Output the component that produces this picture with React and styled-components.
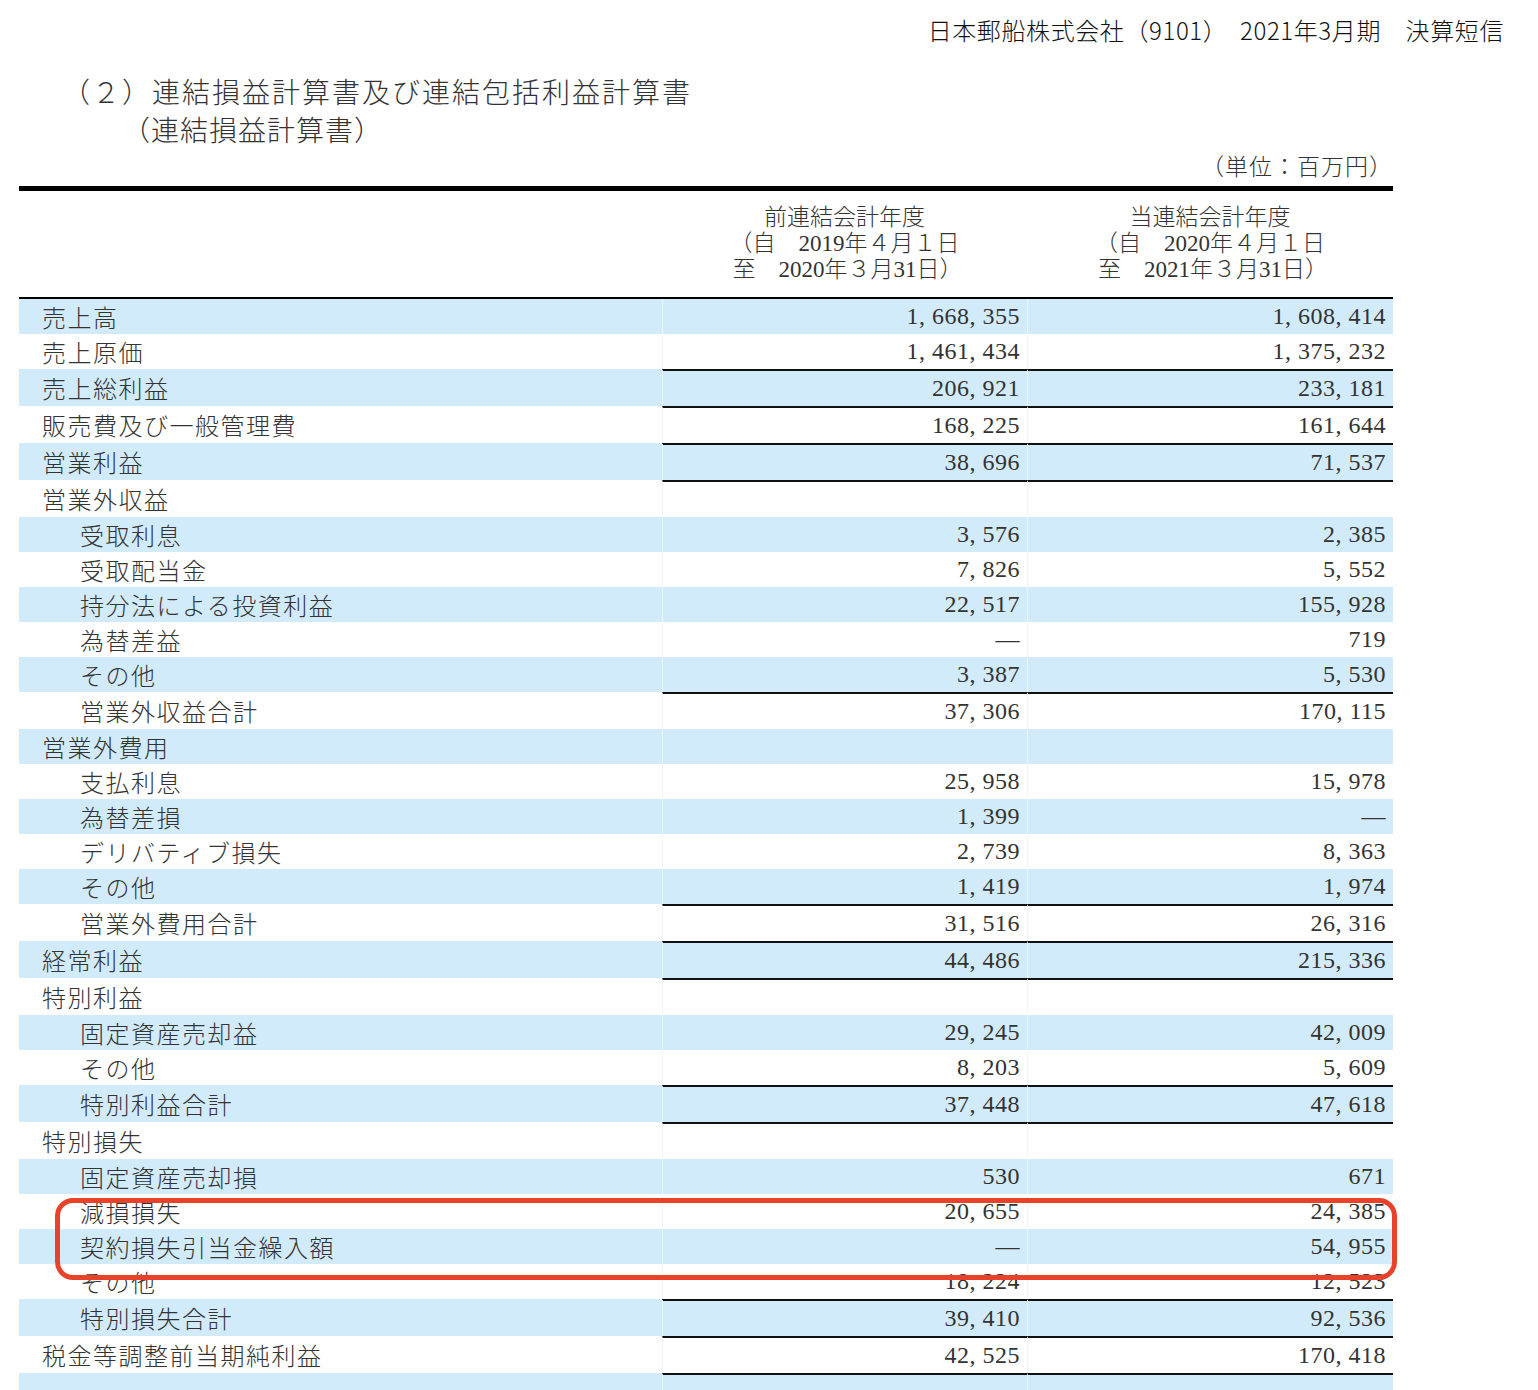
import React from 'react'
import styled, { createGlobalStyle } from 'styled-components'

const Global = createGlobalStyle`
  body { margin: 0; background: #fff; color: #222; }
`

const JP = `"Liberation Serif", "Noto Sans CJK JP", serif`

const Page = styled.div`
  width: 1538px;
  height: 1390px;
  overflow: hidden;
  position: relative;
  font-family: ${JP};
`

const Company = styled.div`
  text-align: right;
  padding: 12px 34px 0 0;
  height: 38px;
  font-family: "Noto Sans CJK JP", sans-serif;
  font-size: 24px;
  font-weight: 300;
  letter-spacing: 0.6px;
  color: #111;
`

const Title = styled.div`
  padding: 25px 0 0 62px;
  font-size: 28px;
  font-weight: 300;
  line-height: 38px;
  letter-spacing: 2px;
  color: #333;
`

const Sub = styled.div`
  padding-left: 122px;
  font-size: 28px;
  font-weight: 300;
  line-height: 38px;
  letter-spacing: 1px;
  color: #333;
`

const Unit = styled.div`
  width: 1393px;
  text-align: right;
  font-size: 23px;
  font-weight: 300;
  line-height: 30px;
  margin-top: 2px;
  letter-spacing: 1px;
  color: #333;
`

const Table = styled.div`
  margin: 3px 0 0 19px;
  width: 1374px;
  border-top: 5px solid #000;
  display: grid;
  grid-template-columns: 643px 365px 366px;
`

const Head = styled.div`
  height: 108px;
  border-bottom: 2px solid #000;
  text-align: center;
  font-size: 23px;
  font-weight: 300;
  line-height: 26px;
  padding-top: 14px;
  box-sizing: border-box;
  color: #333;
`

const Cell = styled.div`
  box-sizing: border-box;
  height: ${p => p.$h}px;
  background: ${p => (p.$blue ? '#d2ebfb' : '#fff')};
  display: flex;
  align-items: center;
  font-size: 24px;
  font-weight: 300;
  color: #333;
  border-top: ${p => (p.$line ? '2px solid #111' : 'none')};
  border-left: ${p => (p.$sep ? '1px solid #eef6fc' : 'none')};
`

const Label = styled(Cell)`
  padding-left: ${p => (p.$indent ? 61 : 23)}px;
  letter-spacing: 1.5px;
`

const Num = styled(Cell)`
  justify-content: flex-end;
  padding-right: 7px;
  letter-spacing: 0.5px;
`

const Mark = styled.div`
  position: absolute;
  left: 55px;
  top: 1198px;
  width: 1342px;
  height: 82px;
  box-sizing: border-box;
  border: 5px solid #e8432a;
  border-radius: 18px;
`

// [label, indent, prev, cur, line above values]
const rows = [
  ['売上高', 0, '1, 668, 355', '1, 608, 414', 0],
  ['売上原価', 0, '1, 461, 434', '1, 375, 232', 0],
  ['売上総利益', 0, '206, 921', '233, 181', 1],
  ['販売費及び一般管理費', 0, '168, 225', '161, 644', 1],
  ['営業利益', 0, '38, 696', '71, 537', 1],
  ['営業外収益', 0, '', '', 1],
  ['受取利息', 1, '3, 576', '2, 385', 0],
  ['受取配当金', 1, '7, 826', '5, 552', 0],
  ['持分法による投資利益', 1, '22, 517', '155, 928', 0],
  ['為替差益', 1, '―', '719', 0],
  ['その他', 1, '3, 387', '5, 530', 0],
  ['営業外収益合計', 1, '37, 306', '170, 115', 1],
  ['営業外費用', 0, '', '', 0],
  ['支払利息', 1, '25, 958', '15, 978', 0],
  ['為替差損', 1, '1, 399', '―', 0],
  ['デリバティブ損失', 1, '2, 739', '8, 363', 0],
  ['その他', 1, '1, 419', '1, 974', 0],
  ['営業外費用合計', 1, '31, 516', '26, 316', 1],
  ['経常利益', 0, '44, 486', '215, 336', 1],
  ['特別利益', 0, '', '', 1],
  ['固定資産売却益', 1, '29, 245', '42, 009', 0],
  ['その他', 1, '8, 203', '5, 609', 0],
  ['特別利益合計', 1, '37, 448', '47, 618', 1],
  ['特別損失', 0, '', '', 1],
  ['固定資産売却損', 1, '530', '671', 0],
  ['減損損失', 1, '20, 655', '24, 385', 0],
  ['契約損失引当金繰入額', 1, '―', '54, 955', 0],
  ['その他', 1, '18, 224', '12, 523', 0],
  ['特別損失合計', 1, '39, 410', '92, 536', 1],
  ['税金等調整前当期純利益', 0, '42, 525', '170, 418', 1],
  ['', 0, '', '', 1],
]

const App = () => (
  <Page>
    <Global />
    <Company>日本郵船株式会社（9101）　2021年3月期　決算短信</Company>
    <Title>（２）連結損益計算書及び連結包括利益計算書</Title>
    <Sub>（連結損益計算書）</Sub>
    <Unit>（単位：百万円）</Unit>
    <Table>
      <Head />
      <Head>
        前連結会計年度<br />（自　2019年４月１日<br />&nbsp;至　2020年３月31日）
      </Head>
      <Head>
        当連結会計年度<br />（自　2020年４月１日<br />&nbsp;至　2021年３月31日）
      </Head>
      {rows.map(([label, indent, a, b, line], i) => {
        const blue = i % 2 === 0
        const h = line ? 37 : 35
        return (
          <React.Fragment key={i}>
            <Label $blue={blue} $h={h} $indent={indent}>{label}</Label>
            <Num $blue={blue} $h={h} $line={line} $sep>{a}</Num>
            <Num $blue={blue} $h={h} $line={line} $sep>{b}</Num>
          </React.Fragment>
        )
      })}
    </Table>
    <Mark />
  </Page>
)

export default App
